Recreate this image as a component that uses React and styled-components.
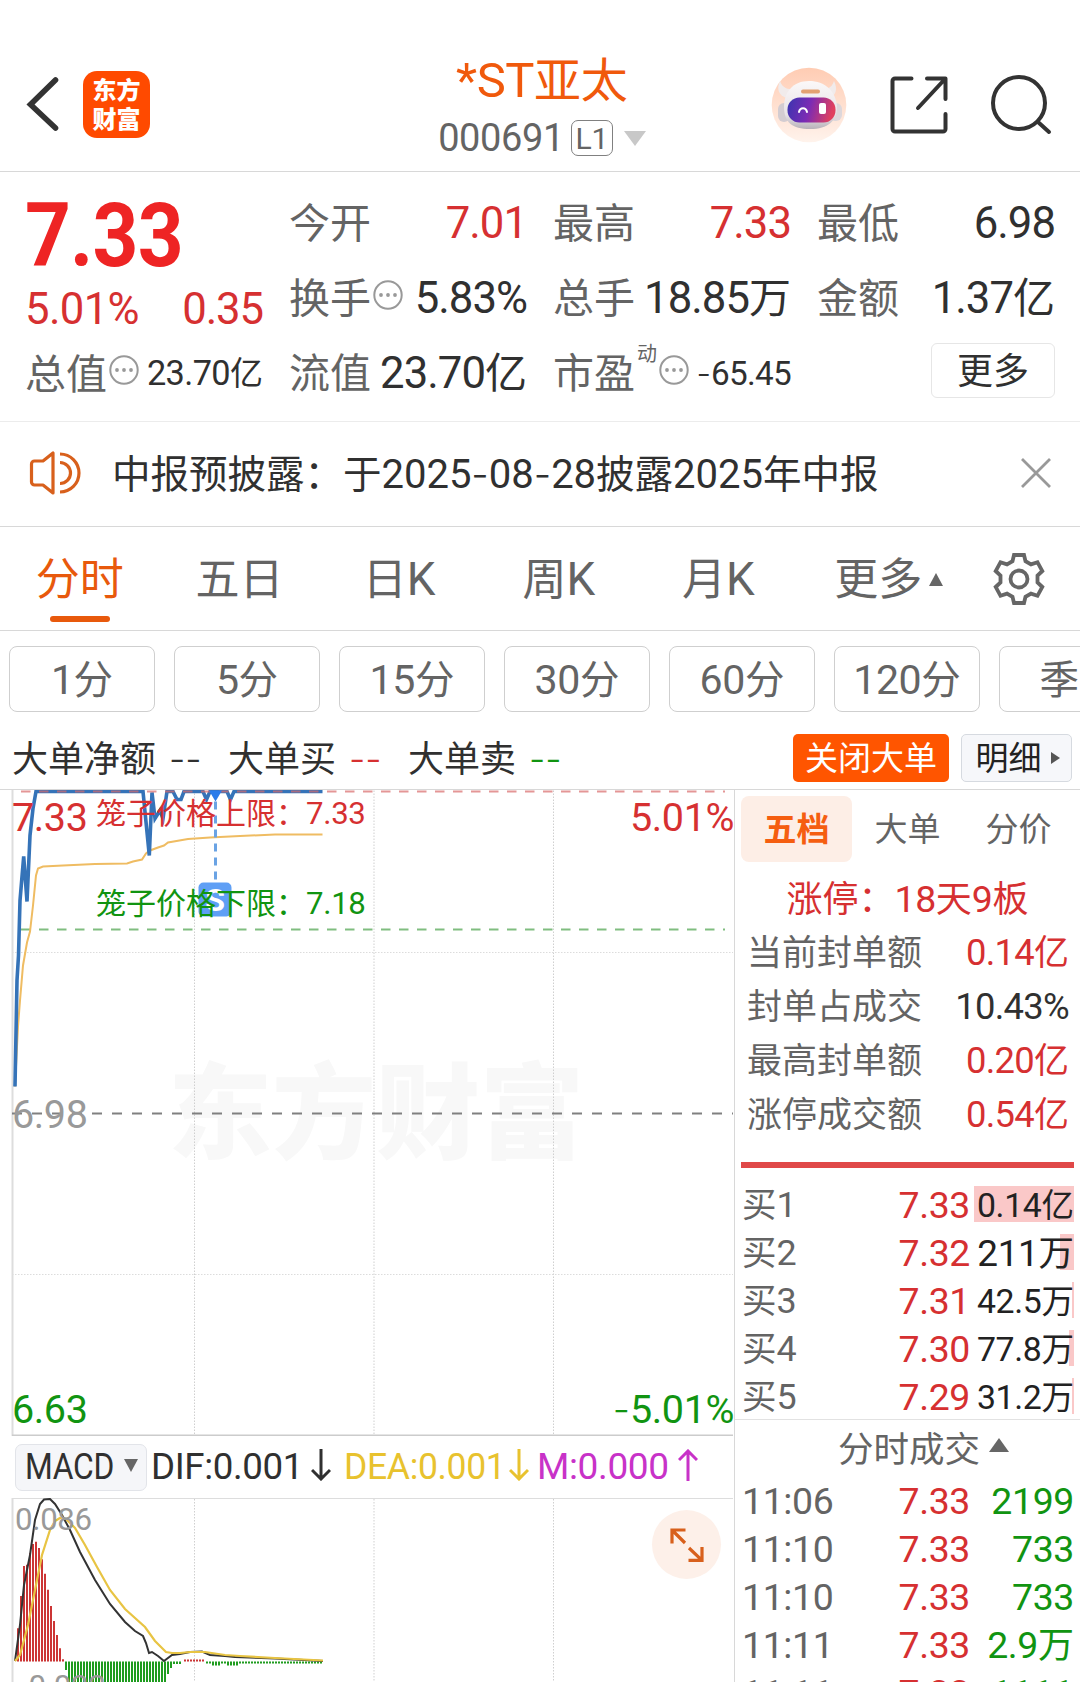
import React from "react";
import styled, { createGlobalStyle, css } from "styled-components";

const Global = createGlobalStyle`
  * { box-sizing: border-box; }
  body { margin: 0; background: #fff; }
`;

const C = {
  red: "#d63031",
  green: "#119411",
  ink: "#303030",
  grey: "#646464",
  light: "#999",
  orange: "#e8590c",
  line: "#d8d8d8",
};

/* ---------- text ---------- */

const TextBox = styled.span`
  display: inline-block;
  flex: none;
  white-space: pre;
  font-family: "Noto Sans CJK SC", sans-serif;
  font-size: ${(p) => p.$size}px;
  line-height: ${(p) => Math.round(p.$size * 1.2)}px;
  font-weight: ${(p) => p.$weight || 400};
  color: ${(p) => p.$color || C.ink};
  transform: translateY(-0.06em) scaleX(${(p) => p.$sx || 1});
  transform-origin: ${(p) => p.$origin || "left"} center;
`;

const Latin = styled.span`
  font-family: Roboto, sans-serif;
  font-size: 1.04em;
  line-height: 0;
  letter-spacing: ${(p) => p.$ls ?? -0.01}em;
`;

const Dash = styled.span`
  font-family: Inter, sans-serif;
  font-weight: 300;
  line-height: 0;
`;

function Txt({ children, size, color, weight, sx, origin, ls }) {
  const runs = String(children).match(/-+|[\x20-\x2c\x2e-\x7e]+|[^\x20-\x7e]+/g) || [];
  return (
    <TextBox $size={size} $color={color} $weight={weight} $sx={sx} $origin={origin}>
      {runs.map((r, i) =>
        r[0] === "-" ? <Dash key={i}>{r}</Dash>
          : r.charCodeAt(0) < 127 ? <Latin key={i} $ls={ls}>{r}</Latin>
          : r
      )}
    </TextBox>
  );
}

/* ---------- page ---------- */

const Page = styled.main`
  width: 1080px;
  height: 1682px;
  overflow: hidden;
  display: flex;
  flex-direction: column;
  background: #fff;
`;

const Header = styled.header`
  height: 172px;
  flex: none;
  padding: 38px 28px 0 26px;
  border-bottom: 1px solid ${C.line};
  display: grid;
  grid-template-columns: 290px 1fr 284px;
`;

const HeaderSide = styled.div`
  display: flex;
  align-items: center;
  height: 133px;
  justify-content: ${(p) => (p.$end ? "flex-end" : "flex-start")};
  gap: ${(p) => p.$gap}px;
`;

const Logo = styled.div`
  width: 67px;
  height: 67px;
  border-radius: 14px;
  background: #ff4a00;
  color: #fff;
  font: 900 24px/29px "Noto Sans CJK SC", sans-serif;
  text-align: center;
  padding-top: 3px;
`;

const TitleBlock = styled.div`
  display: flex;
  flex-direction: column;
  align-items: center;
  padding-top: 14px;
`;

const CodeRow = styled.div`
  display: flex;
  align-items: center;
  height: 40px;
  margin-top: 10px;
`;

const LevelBadge = styled.span`
  width: 42px;
  height: 36px;
  margin-left: 7px;
  border: 1.5px solid #808080;
  border-radius: 7px;
  display: flex;
  align-items: center;
  justify-content: center;
`;

const Triangle = styled.i`
  width: 0;
  height: 0;
  flex: none;
  border: solid transparent;
  margin-left: ${(p) => p.$ml || 0}px;
  margin-bottom: ${(p) => p.$mb || 0}px;
  ${(p) => p.$dir === "down" && css`
    border-width: ${p.$h}px ${p.$w / 2}px 0;
    border-top-color: ${p.$c};
  `}
  ${(p) => p.$dir === "up" && css`
    border-width: 0 ${p.$w / 2}px ${p.$h}px;
    border-bottom-color: ${p.$c};
  `}
  ${(p) => p.$dir === "right" && css`
    border-width: ${p.$h / 2}px 0 ${p.$h / 2}px ${p.$w}px;
    border-left-color: ${p.$c};
  `}
`;

/* ---------- quote ---------- */

const Quote = styled.section`
  height: 250px;
  flex: none;
  padding: 13px 24px 0 25px;
  border-bottom: 1px solid #ececec;
  display: grid;
  grid-template-columns: 238px 1fr;
  column-gap: 26px;
`;

const PriceCol = styled.div`
  display: grid;
  grid-template-rows: 97px 54px 74px;
  align-items: center;
`;

const StatGrid = styled.div`
  display: grid;
  grid-template-columns: repeat(3, 238px);
  grid-template-rows: repeat(3, 75px);
  column-gap: 26px;
`;

const Stat = styled.div`
  display: flex;
  align-items: center;
  justify-content: space-between;
`;

const StatLabel = styled.span`
  display: flex;
  align-items: center;
  gap: 2px;
  svg { margin-bottom: 6px; }
`;

const Sup = styled.span`
  display: flex;
  align-self: flex-start;
  margin: -6px 0 0 0;
`;

const MoreButton = styled.button`
  width: 124px;
  height: 55px;
  margin: 0 0 4px auto;
  align-self: center;
  border: 1.5px solid #e6e6e6;
  border-radius: 6px;
  background: #fff;
  padding: 0;
  display: flex;
  align-items: center;
  justify-content: center;
`;

/* ---------- notice ---------- */

const Notice = styled.section`
  height: 105px;
  flex: none;
  padding: 0 29px 3px 28px;
  border-bottom: 1px solid ${C.line};
  display: flex;
  align-items: center;
`;

const NoticeText = styled.div`
  flex: 1;
  display: flex;
  padding-left: 30px;
`;

/* ---------- tabs ---------- */

const Tabs = styled.nav`
  height: 104px;
  flex: none;
  border-bottom: 1px solid ${C.line};
  display: grid;
  grid-template-columns: repeat(6, 159.6px) 1fr;
`;

const Tab = styled.div`
  display: flex;
  flex-direction: column;
  align-items: center;
  padding-top: 25px;
`;

const TabRow = styled.div`
  display: flex;
  align-items: center;
  height: 54px;
  ${(p) => p.$shift && css`margin-left: 22px;`}
`;

const Indicator = styled.i`
  width: 60px;
  height: 6px;
  margin-top: 10px;
  border-radius: 3px;
  background: ${C.orange};
`;

const GearCell = styled.div`
  display: flex;
  justify-content: center;
  padding-top: 25px;
`;

const Chips = styled.div`
  height: 96px;
  flex: none;
  padding: 15px 0 0 9px;
  display: flex;
  gap: 19px;
  overflow: hidden;
`;

const Chip = styled.button`
  width: 146px;
  height: 66px;
  flex: none;
  border: 1.5px solid #cfcfcf;
  border-radius: 8px;
  background: #fff;
  padding: 0 0 2px;
  display: flex;
  align-items: center;
  justify-content: center;
`;

const BigOrders = styled.div`
  height: 63px;
  flex: none;
  padding: 0 8px 0 12px;
  border-bottom: 1px solid ${C.line};
  display: flex;
  align-items: center;
`;

const OrderItem = styled.div`
  display: flex;
  align-items: center;
  gap: 13px;
  width: ${(p) => p.$w}px;
`;

const CloseOrders = styled.button`
  width: 156px;
  height: 48px;
  margin-left: auto;
  border: 0;
  border-radius: 5px;
  background: #ff5500;
  padding: 0;
  display: flex;
  align-items: center;
  justify-content: center;
`;

const DetailButton = styled.button`
  width: 111px;
  height: 48px;
  margin-left: 12px;
  border: 1.5px solid #d6dae0;
  border-radius: 5px;
  background: #f6f7fa;
  padding: 0 0 0 2px;
  display: flex;
  align-items: center;
  justify-content: center;
`;

/* ---------- charts ---------- */

const Body = styled.div`
  flex: 1;
  min-height: 0;
  display: grid;
  grid-template-columns: 735px 1fr;
`;

const ChartCol = styled.div`
  border-right: 1.5px solid ${C.line};
  display: flex;
  flex-direction: column;
  overflow: hidden;
`;

const Canvas = styled.div`
  position: relative;
  flex: none;
  height: ${(p) => p.$h}px;
  overflow: hidden;
`;

const Drawing = styled.svg`
  display: block;
`;

const Mark = styled.div`
  position: absolute;
  display: flex;
  top: ${(p) => p.$y}px;
  ${(p) => (p.$right != null ? `right: ${p.$right}px;` : `left: ${p.$x}px;`)}
`;

const Watermark = styled.div`
  position: absolute;
  left: 168px;
  top: 241px;
  font: 900 104px/150px "Noto Sans CJK SC", sans-serif;
  color: #f8f8f8;
  white-space: nowrap;
`;

const IndicatorBar = styled.div`
  height: 62px;
  flex: none;
  padding-left: 15px;
  display: flex;
  align-items: center;
`;

const IndicatorPicker = styled.button`
  width: 132px;
  height: 47px;
  border: 1.5px solid #e2e4e9;
  border-radius: 7px;
  background: #f5f6f9;
  padding: 0 0 3px 9px;
  display: flex;
  align-items: center;
`;

const PickerName = styled.span`
  width: 99px;
  display: flex;
`;

const IndicatorValue = styled.div`
  display: flex;
  align-items: center;
  justify-content: space-between;
  width: ${(p) => p.$w}px;
  margin-left: ${(p) => p.$ml}px;
  padding-bottom: 4px;
`;

const ArrowSlot = styled.span`
  flex: none;
  display: flex;
  width: 20px;
  margin-left: -12px;
`;

const ExpandButton = styled.button`
  position: absolute;
  left: 652px;
  top: 12px;
  width: 69px;
  height: 69px;
  border: 0;
  border-radius: 50%;
  background: #fdf0e9;
  padding: 0;
  display: flex;
  align-items: center;
  justify-content: center;
`;

/* ---------- depth panel ---------- */

const Depth = styled.aside`
  padding: 6px 6px 0 6px;
  display: flex;
  flex-direction: column;
  overflow: hidden;
`;

const DepthTabs = styled.div`
  flex: none;
  display: grid;
  grid-template-columns: repeat(3, 111px);
  height: 66px;
`;

const DepthTab = styled.div`
  display: flex;
  align-items: center;
  justify-content: center;
  border-radius: 8px;
  background: ${(p) => (p.$on ? "#fdeee6" : "transparent")};
`;

const LimitTitle = styled.div`
  flex: none;
  height: 63px;
  padding-top: 10px;
  display: flex;
  align-items: center;
  justify-content: center;
`;

const LimitRow = styled.div`
  flex: none;
  height: 54px;
  padding: 0 5px 0 6px;
  display: flex;
  align-items: center;
  justify-content: space-between;
`;

const RedBar = styled.i`
  flex: none;
  display: block;
  height: 6px;
  margin: 21px 0 12px;
  background: #e04848;
`;

const TradeRow = styled.div`
  flex: none;
  height: 48px;
  display: grid;
  grid-template-columns: 1fr 70px 100px;
  column-gap: 4px;
  align-items: center;
  padding-left: 1px;
`;

const Cell = styled.div`
  display: flex;
  align-items: center;
  height: 36px;
  justify-content: ${(p) => (p.$end ? "flex-end" : "flex-start")};
`;

const VolumeCell = styled(Cell)`
  background: linear-gradient(#fac8c8, #fac8c8) right / ${(p) => p.$fill}px 100% no-repeat;
`;

const DealsHead = styled.div`
  flex: none;
  height: 57px;
  margin: -1px -6px 0;
  border-top: 1px solid #e2e2e2;
  padding-left: 32px;
  display: flex;
  align-items: center;
  justify-content: center;
`;

/* ---------- drawings ---------- */

const BackIcon = () => (
  <svg width="34" height="60" viewBox="0 0 34 60" fill="none" stroke="#333" strokeWidth="5.6" strokeLinecap="round" strokeLinejoin="miter">
    <path d="M29.5 5 4.500 29.5 29.5 53" />
  </svg>
);

const Robot = () => (
  <svg width="76" height="76" viewBox="0 0 76 76">
    <defs>
      <linearGradient id="halo" x1="0" y1="0" x2="0" y2="1">
        <stop offset="0" stopColor="#ffccb3" />
        <stop offset="1" stopColor="#fff3ec" />
      </linearGradient>
      <linearGradient id="visor" x1="0" y1="0" x2="1" y2="0.15">
        <stop offset="0" stopColor="#3a35b0" />
        <stop offset="0.5" stopColor="#7b2bb4" />
        <stop offset="1" stopColor="#e0405f" />
      </linearGradient>
      <linearGradient id="shell" x1="0" y1="0" x2="0" y2="1">
        <stop offset="0" stopColor="#fbf8f8" />
        <stop offset="0.7" stopColor="#e8e3e7" />
        <stop offset="1" stopColor="#b8b2b9" />
      </linearGradient>
    </defs>
    <circle cx="38" cy="38" r="37.3" fill="url(#halo)" />
    <path d="M9 14c-4 8-1 15 7 17l7-9c-7 1-12-2-14-8zM63 14c4 8 2 15-5 17l-8-9c7 1 11-2 13-8z" fill="#f1ebeb" />
    <rect x="7" y="36" width="12" height="19" rx="6" fill="#d3ccd1" />
    <rect x="58" y="36" width="13" height="18" rx="6" fill="#ddd7db" />
    <path d="M13 40c0-15 9-26 25-26s27 10 28 26c0 14-9 22-27 22S13 55 13 40z" fill="url(#shell)" />
    <rect x="16.500" y="30.500" width="48" height="25" rx="12" fill="url(#visor)" />
    <rect x="30" y="22.500" width="19" height="4" rx="2" fill="#e3a272" />
    <path d="M28 45c1-5 7-5 8 0" fill="none" stroke="#fff" strokeWidth="2" strokeLinecap="round" />
    <rect x="48" y="36" width="7" height="11" rx="2" fill="#fff" />
  </svg>
);

const ShareIcon = () => (
  <svg width="60" height="60" viewBox="0 0 60 60" fill="none" stroke="#333" strokeWidth="4" strokeLinecap="round" strokeLinejoin="round">
    <path d="M22.500 3.500H6a2.500 2.500 0 0 0-2.500 2.500v48A2.500 2.500 0 0 0 6 56.500h48a2.500 2.500 0 0 0 2.500-2.500V39M38 3.500h18.500V24M56 4 29 33" />
  </svg>
);

const SearchIcon = () => (
  <svg width="62" height="62" viewBox="0 0 62 62" fill="none" stroke="#333" strokeWidth="4" strokeLinecap="round">
    <circle cx="29" cy="29" r="26" />
    <path d="M48 48 59 58" />
  </svg>
);

const Dots = () => (
  <svg width="30" height="30" viewBox="0 0 30 30">
    <circle cx="15" cy="15" r="13.700" fill="none" stroke="#999" strokeWidth="2" />
    <circle cx="8" cy="15" r="1.900" fill="#999" />
    <circle cx="15" cy="15" r="1.900" fill="#999" />
    <circle cx="22" cy="15" r="1.900" fill="#999" />
  </svg>
);

const Speaker = () => (
  <svg width="54" height="46" viewBox="0 0 54 46" fill="none" stroke="#d8601c" strokeWidth="3.200" strokeLinejoin="round">
    <path d="M25 3v40l-10-8H6.500A3 3 0 0 1 3.500 32V14a3 3 0 0 1 3-3H15z" />
    <path d="M32 12.500a10.500 10.500 0 0 1 0 21M32 4a19 19 0 0 1 0 38" />
  </svg>
);

const CloseIcon = () => (
  <svg width="30" height="30" viewBox="0 0 30 30" stroke="#999" strokeWidth="2.800">
    <path d="M1 1 29 29M29 1 1 29" />
  </svg>
);

const Gear = () => (
  <svg width="54" height="54" viewBox="-27 -27 54 54" fill="none" stroke="#666" strokeWidth="3.800" strokeLinejoin="miter">
    <path d="M-5-24H5l1.500 6.200 5.500 3.200L18.500-16.800 23.300-8 18.500-3.500v7L23.300 8l-4.800 8.800L12 14.600 6.500 17.800 5 24H-5l-1.500-6.200L-12 14.600l-6.500 2.200L-23.300 8l4.800-4.500v-7L-23.300-8l4.800-8.800 6.500 2.200 5.500-3.200z" />
    <circle r="8.500" />
  </svg>
);

const Arrow = ({ color, up }) => (
  <ArrowSlot>
    <svg width="20" height="32" viewBox="0 0 20 32" fill="none" stroke={color} strokeWidth="3">
      <path d={up ? "M10 32V3M1 11l9-9 9 9" : "M10 0v29M1 21l9 9 9-9"} />
    </svg>
  </ArrowSlot>
);

const ExpandIcon = () => (
  <svg width="34" height="34" viewBox="0 0 34 34" fill="none" stroke="#d8601c" strokeWidth="3.200">
    <path d="M15.500 2H2v13.500M2 2l13 13M18.500 32.400h13.500V19M32 32.400 19 20" />
  </svg>
);

const GRID_X = [194.5, 374, 553.5];

const PRICE = "15,1086 17,980 18.5,955 20,900 23.700,856 27,901 30,835 33,808 36,791 143,791 149.300,855 152,792 155,818 160,810 163,818 167,791 173,791 177,799 181,799 184,791 203,791 206.500,799 210,791 227,791 230.500,799 234,791 322.500,791";
const AVERAGE = "15,1086 18,1026 20,1000 23,965 27,942 30,931 33,905 36,875 38,868 43,866 63,865 95,863.5 127,863 133,861 142,859 146,853 150,850 158,847 164,845 168,842 188,838.5 210,837 240,835.5 275,834 322.500,834";

const PriceChart = () => (
  <Drawing width="734" height="647" viewBox="0 789.500 734 647" fill="none">
    <g stroke="#cfcfcf" strokeDasharray="1.500 1.500">
      {GRID_X.map((x) => <path key={x} d={`M${x} 790V1434`} />)}
      <path d="M12 952H733M12 1274H733" stroke="#dcdcdc" />
    </g>
    <path d="M12.500 789V1436" stroke="#ddd" strokeWidth="2" />
    <path d="M12 1435H733" stroke="#ccc" strokeWidth="2" />
    <path d="M12 1113H733" stroke="#808080" strokeWidth="2" strokeDasharray="10 10" />
    <path d="M21 929H725" stroke="#80bd80" strokeWidth="2" strokeDasharray="9.500 8.500" />
    <polyline points={AVERAGE} stroke="#efbc62" strokeWidth="2" />
    <polyline points={PRICE} stroke="#3573b8" strokeWidth="3.600" />
    <path d="M21 791H725" stroke="#d86a6a" strokeOpacity="0.700" strokeWidth="2" strokeDasharray="9.500 8.500" />
    <path d="M209 790h13l-6.500 11z" fill="#2a7bea" />
    <path d="M215.500 801V882" stroke="#6aa3e4" strokeWidth="3" strokeDasharray="8 6" />
    <rect x="198.500" y="882" width="33" height="34" rx="5" fill="#5f9ff5" />
    <text x="215" y="910" fill="#fff" fontFamily="Roboto, sans-serif" fontWeight="700" fontSize="32" textAnchor="middle">S</text>
  </Drawing>
);

const RED_TOPS = [625, 528, 438, 434, 400, 372, 365, 384, 418, 461, 509, 558, 603, 645, 685, 718];
const redBars = RED_TOPS.map((t, i) => [18 + i * 3, 1420 + t / 3]);
const greenBars = Array.from({ length: 39 }, (_, i) => {
  const x = 66 + i * 3;
  const end = { 0: 1670, 34: 1674, 35: 1668, 36: 1664, 37: 1664, 38: 1664 };
  return [x, end[i] || 1690];
});
const tailBars = Array.from({ length: 39 }, (_, i) => {
  const x = 207 + i * 3;
  const h = x > 211 && x < 220 ? 4 : x > 226 && x < 240 ? 4 : 2;
  return [x, 1661.5 + h];
});

const MacdChart = () => (
  <Drawing width="734" height="185" viewBox="0 1498 734 185" fill="none">
    <g stroke="#cfcfcf" strokeDasharray="1.500 1.500">
      {GRID_X.map((x) => <path key={x} d={`M${x} 1499V1683`} />)}
    </g>
    <path d="M12 1498.500H733" stroke="#ddd" />
    <path d="M12.500 1498V1683" stroke="#ddd" strokeWidth="2" />
    <g stroke="#cc3535" strokeWidth="2">
      {redBars.map(([x, y]) => <path key={x} d={`M${x} 1661.500V${y}`} />)}
      <path d="M184 1660.500H204" strokeDasharray="2 1" />
    </g>
    <g stroke="#1f9c1f" strokeWidth="2">
      {greenBars.map(([x, y]) => <path key={x} d={`M${x} 1661.500V${y}`} />)}
      {tailBars.map(([x, y]) => <path key={x} d={`M${x} 1661.500V${y}`} />)}
    </g>
    <polyline strokeWidth="2" stroke="#333" points="15,1661 20,1625 24,1585 30,1555 35,1520 40,1504 44,1499.500 50,1499 55,1504 62,1515 70,1530 80,1552 95,1580 110,1604 125,1622 135,1631 143,1636 146,1643 149,1653 152,1652 158,1656 164,1661 172,1655 180,1654 190,1652 202,1651.500 210,1655 225,1656 235,1657 275,1658.500 323,1661" />
    <polyline strokeWidth="2.200" stroke="#e8c443" points="15,1661 20,1655 28,1625 35,1590 42,1555 50,1530 55,1521 60,1518 66,1519 75,1528 85,1545 97,1567 110,1590 125,1609 145,1627 155,1641 166,1652 172,1653 180,1653 190,1652 205,1652 225,1655 240,1656 275,1658 323,1660.500" />
  </Drawing>
);

/* ---------- data ---------- */

const STATS = [
  { label: "今开", value: "7.01", color: C.red },
  { label: "最高", value: "7.33", color: C.red },
  { label: "最低", value: "6.98" },
  { label: "换手", value: "5.83%", dots: true },
  { label: "总手", value: "18.85万" },
  { label: "金额", value: "1.37亿" },
  { label: "流值", value: "23.70亿" },
  { label: "市盈", value: "-65.45", dots: true, sup: "动", size: 32 },
];

const LIMITS = [
  ["当前封单额", "0.14亿", C.red],
  ["封单占成交", "10.43%", C.ink],
  ["最高封单额", "0.20亿", C.red],
  ["涨停成交额", "0.54亿", C.red],
];

const BIDS = [
  ["买1", "7.33", "0.14亿", 100, 32.5],
  ["买2", "7.32", "211万", 14, 35.5],
  ["买3", "7.31", "42.5万", 2, 32.5],
  ["买4", "7.30", "77.8万", 5, 32.5],
  ["买5", "7.29", "31.2万", 2, 32.5],
];

const DEALS = [
  ["11:06", "7.33", "2199"],
  ["11:10", "7.33", "733"],
  ["11:10", "7.33", "733"],
  ["11:11", "7.33", "2.9万"],
  ["11:11", "7.33", "1111"],
];

export default function App() {
  return (
    <Page>
      <Global />
      <Header>
        <HeaderSide $gap={23}>
          <BackIcon />
          <Logo>东方<br />财富</Logo>
        </HeaderSide>
        <TitleBlock>
          <Txt size={47} color="#f0590c">*ST亚太</Txt>
          <CodeRow>
            <Txt size={36.5} color={C.grey}>000691</Txt>
            <LevelBadge><Txt size={29} color={C.grey} origin="center">L1</Txt></LevelBadge>
            <Triangle $dir="down" $w={22} $h={15} $c="#c8c8c8" $ml={11} />
          </CodeRow>
        </TitleBlock>
        <HeaderSide $end $gap={41.5}>
          <Robot /><ShareIcon /><SearchIcon />
        </HeaderSide>
      </Header>

      <Quote>
        <PriceCol>
          <Txt size={86} weight={700} color="#ee2424" sx={0.895}>7.33</Txt>
          <Stat>
            <Txt size={42} color={C.red} ls={-0.015}>5.01%</Txt>
            <Txt size={42} color={C.red} ls={-0.025}>0.35</Txt>
          </Stat>
          <Stat>
            <StatLabel><Txt size={41} color={C.grey}>总值</Txt><Dots /></StatLabel>
            <Txt size={33} ls={-0.018}>23.70亿</Txt>
          </Stat>
        </PriceCol>
        <StatGrid>
          {STATS.map((s) => (
            <Stat key={s.label}>
              <StatLabel>
                <Txt size={41} color={C.grey}>{s.label}</Txt>
                {s.sup && <Sup><Txt size={20} color={C.grey}>{s.sup}</Txt></Sup>}
                {s.dots && <Dots />}
              </StatLabel>
              <Txt size={s.size || 42} color={s.color} ls={-0.022}>{s.value}</Txt>
            </Stat>
          ))}
          <MoreButton><Txt size={36}>更多</Txt></MoreButton>
        </StatGrid>
      </Quote>

      <Notice>
        <Speaker />
        <NoticeText><Txt size={38.5} ls={-0.001}>中报预披露：于2025-08-28披露2025年中报</Txt></NoticeText>
        <CloseIcon />
      </Notice>

      <Tabs>
        {["分时", "五日", "日K", "周K", "月K"].map((t, i) => (
          <Tab key={t}>
            <TabRow><Txt size={44} color={i ? C.grey : C.orange}>{t}</Txt></TabRow>
            {i === 0 && <Indicator />}
          </Tab>
        ))}
        <Tab>
          <TabRow $shift>
            <Txt size={44} color={C.grey}>更多</Txt>
            <Triangle $dir="up" $w={15} $h={13} $c="#666" $ml={7} />
          </TabRow>
        </Tab>
        <GearCell><Gear /></GearCell>
      </Tabs>

      <Chips>
        {["1分", "5分", "15分", "30分", "60分", "120分", "季K"].map((t) => (
          <Chip key={t}><Txt size={39.5} color={C.grey} origin="center">{t}</Txt></Chip>
        ))}
      </Chips>

      <BigOrders>
        <OrderItem $w={216}><Txt size={36}>大单净额</Txt><Txt size={36}>--</Txt></OrderItem>
        <OrderItem $w={180}><Txt size={36}>大单买</Txt><Txt size={36} color={C.red}>--</Txt></OrderItem>
        <OrderItem $w={180}><Txt size={36}>大单卖</Txt><Txt size={36} color={C.green}>--</Txt></OrderItem>
        <CloseOrders><Txt size={33} color="#fff">关闭大单</Txt></CloseOrders>
        <DetailButton>
          <Txt size={33} color="#222">明细</Txt>
          <Triangle $dir="right" $w={9} $h={12} $c="#555" $ml={9} />
        </DetailButton>
      </BigOrders>

      <Body>
        <ChartCol>
          <Canvas $h={646}>
            <Watermark>东方财富</Watermark>
            <Mark $x={0} $y={0}><PriceChart /></Mark>
            <Mark $x={12} $y={4}><Txt size={38} color={C.red}>7.33</Txt></Mark>
            <Mark $x={96} $y={5}><Txt size={30} color={C.red}>笼子价格上限：7.33</Txt></Mark>
            <Mark $right={0} $y={4}><Txt size={38} color={C.red} origin="right">5.01%</Txt></Mark>
            <Mark $x={96} $y={95}><Txt size={30} color={C.green}>笼子价格下限：7.18</Txt></Mark>
            <Mark $x={12} $y={301}><Txt size={38} color={C.light}>6.98</Txt></Mark>
            <Mark $x={12} $y={596}><Txt size={38} color={C.green}>6.63</Txt></Mark>
            <Mark $right={0} $y={596}><Txt size={38} color={C.green} origin="right">-5.01%</Txt></Mark>
          </Canvas>
          <IndicatorBar>
            <IndicatorPicker>
              <PickerName><Txt size={36} sx={0.85}>MACD</Txt></PickerName>
              <Triangle $dir="down" $w={15} $h={13} $c="#666" />
            </IndicatorPicker>
            <IndicatorValue $ml={4} $w={180}><Txt size={36} sx={0.98}>DIF:0.001</Txt><Arrow color={C.ink} /></IndicatorValue>
            <IndicatorValue $ml={13} $w={185}><Txt size={36} color="#e8c22e" sx={0.95}>DEA:0.001</Txt><Arrow color="#e8c22e" /></IndicatorValue>
            <IndicatorValue $ml={8} $w={161}><Txt size={36} color="#c832c8" sx={0.99}>M:0.000</Txt><Arrow up color="#c832c8" /></IndicatorValue>
          </IndicatorBar>
          <Canvas $h={185}>
            <MacdChart />
            <Mark $x={15} $y={3}><Txt size={30} color={C.light}>0.086</Txt></Mark>
            <Mark $x={15} $y={170}><Txt size={30} color={C.light}>-0.022</Txt></Mark>
            <ExpandButton><ExpandIcon /></ExpandButton>
          </Canvas>
        </ChartCol>

        <Depth>
          <DepthTabs>
            <DepthTab $on><Txt size={33} weight={700} color="#f55e10">五档</Txt></DepthTab>
            <DepthTab><Txt size={33} color={C.grey}>大单</Txt></DepthTab>
            <DepthTab><Txt size={33} color={C.grey}>分价</Txt></DepthTab>
          </DepthTabs>
          <LimitTitle><Txt size={36} color={C.red}>涨停：18天9板</Txt></LimitTitle>
          {LIMITS.map(([label, value, color]) => (
            <LimitRow key={label}>
              <Txt size={35} color={C.grey}>{label}</Txt>
              <Txt size={35} color={color} ls={-0.02}>{value}</Txt>
            </LimitRow>
          ))}
          <RedBar />
          {BIDS.map(([label, price, vol, fill, size]) => (
            <TradeRow key={label}>
              <Cell><Txt size={34.5} color={C.grey}>{label}</Txt></Cell>
              <Cell $end><Txt size={36} color={C.red}>{price}</Txt></Cell>
              <VolumeCell $end $fill={fill}><Txt size={size} color="#222">{vol}</Txt></VolumeCell>
            </TradeRow>
          ))}
          <DealsHead>
            <Txt size={35.5} color={C.grey}>分时成交</Txt>
            <Triangle $dir="up" $w={21} $h={14} $c="#666" $ml={9} $mb={6} />
          </DealsHead>
          {DEALS.map(([time, price, vol], i) => (
            <TradeRow key={i}>
              <Cell><Txt size={36} color={C.grey}>{time}</Txt></Cell>
              <Cell $end><Txt size={36} color={C.red}>{price}</Txt></Cell>
              <Cell $end><Txt size={36} color={C.green}>{vol}</Txt></Cell>
            </TradeRow>
          ))}
        </Depth>
      </Body>
    </Page>
  );
}
